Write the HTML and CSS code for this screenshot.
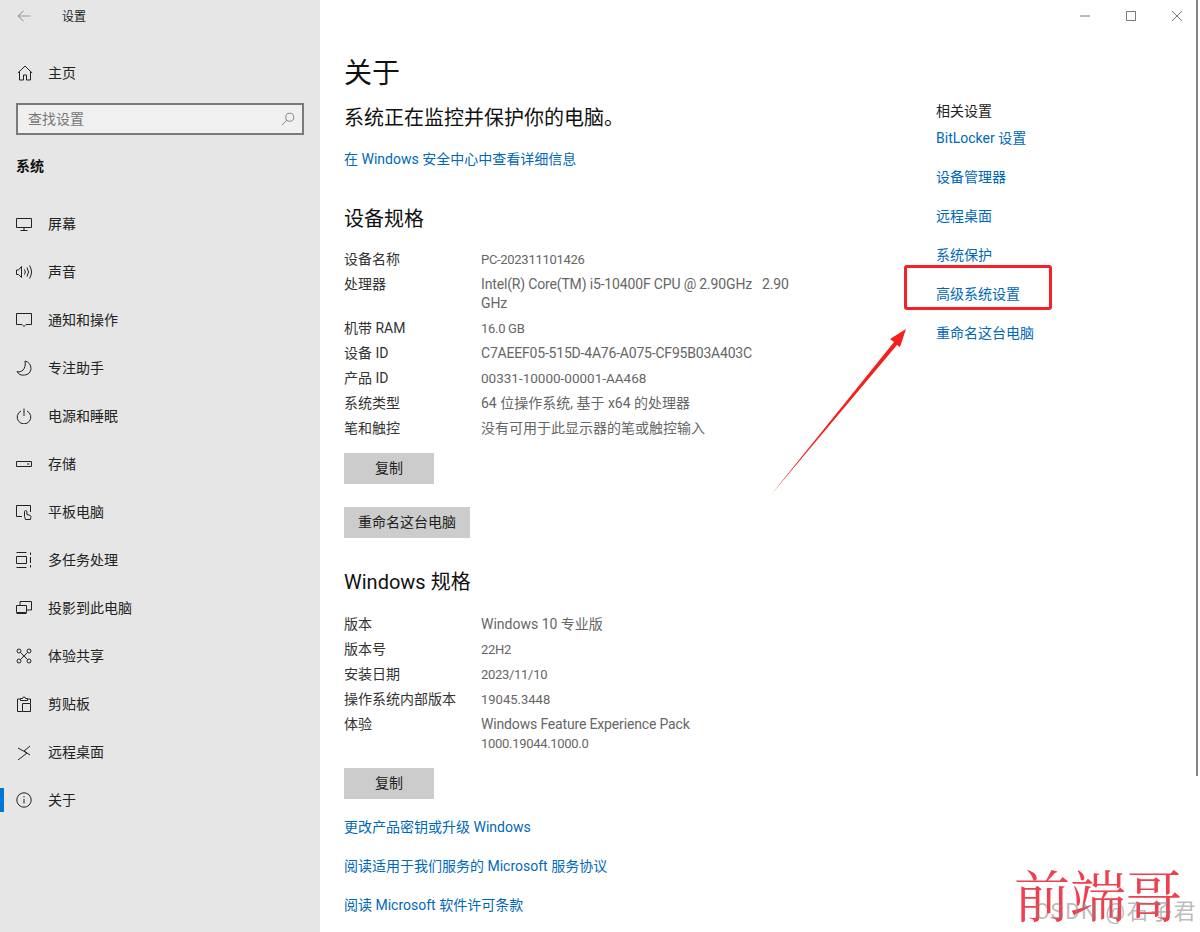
FILE: index.html
```html
<!DOCTYPE html>
<html lang="zh-CN">
<head>
<meta charset="utf-8">
<title>设置</title>
<link rel="stylesheet" href="styles.css">
</head>
<body>
<div class="app">
  <aside class="sidebar">
    <div class="titlebar">
      <svg class="back" viewBox="0 0 16 16"><path d="M15 8H1.500M7.500 2L1.500 8l6 6"/></svg>
      <span class="apptitle">设置</span>
    </div>
    <div class="home">
      <svg class="icon" viewBox="0 0 16 16"><path d="M.8 8L8 1l7.200 7M2.500 6.500V15h4v-5h3v5h4V6.500"/></svg>
      <span>主页</span>
    </div>
    <div class="search">
      <span>查找设置</span>
      <svg class="searchicon" viewBox="0 0 16 16"><circle cx="10" cy="6" r="4.600"/><path d="M6.700 9.300L1 15"/></svg>
    </div>
    <div class="group">系统</div>
    <nav class="nav">
      <div class="item"><svg class="icon" viewBox="0 0 16 16"><path d="M.5 2.500h15v9H.5zM8 11.500v3M4.500 14.500h7"/></svg><span>屏幕</span></div>
      <div class="item"><svg class="icon" viewBox="0 0 16 16"><path d="M.5 6v4.500h2l3 3V2.500l-3 3.500zM8.500 5.500q1.500 2.500 0 5M11 3.500q3 4.500 0 9M13.500 1.500q4 6.500 0 13"/></svg><span>声音</span></div>
      <div class="item"><svg class="icon" viewBox="0 0 16 16"><path d="M.5 1.500h15v11H10l-2 2-2-2H.5z"/></svg><span>通知和操作</span></div>
      <div class="item"><svg class="icon" viewBox="0 0 16 16"><path d="M9 1c4 1 6 4 6 7.500A6.500 6.500 0 0 1 8.500 15 7 7 0 0 1 1 11.500c4 1.500 9.500-2 8-10.500z"/></svg><span>专注助手</span></div>
      <div class="item"><svg class="icon" viewBox="0 0 16 16"><path d="M5 3a6.800 6.800 0 1 0 6 0M8 .5V8"/></svg><span>电源和睡眠</span></div>
      <div class="item"><svg class="icon" viewBox="0 0 16 16"><path d="M.5 5.500h15v5H.5zM11 8h2.500"/></svg><span>存储</span></div>
      <div class="item"><svg class="icon" viewBox="0 0 16 16"><path d="M6 12.500H.5v-11h14V8M8.500 12.500V7.800a1.200 1.200 0 0 1 2.400 0v2.700l3 .8c1 .3 1.200 1 1 2l-.5 2.200H9.500z"/></svg><span>平板电脑</span></div>
      <div class="item"><svg class="icon" viewBox="0 0 16 16"><path d="M.5.500h10M.5 15.500h10M.5 4.500h10v7H.5zM14.500.500v2.500M14.500 5v6M14.500 13v2.500"/></svg><span>多任务处理</span></div>
      <div class="item"><svg class="icon" viewBox="0 0 16 16"><path d="M4 5V1.500h11.500v8.500H11M.5 5.500h10v7H.5zM.5 13.500h10"/></svg><span>投影到此电脑</span></div>
      <div class="item"><svg class="icon" viewBox="0 0 16 16"><circle cx="3" cy="3" r="2"/><circle cx="13" cy="3" r="2"/><circle cx="3" cy="13" r="2"/><circle cx="13" cy="13" r="2"/><path d="M4.500 4.500l7 7M11.500 4.500l-7 7"/></svg><span>体验共享</span></div>
      <div class="item"><svg class="icon" viewBox="0 0 16 16"><path d="M4 3H1.500v12.500h5M12 3h2.500v4M4.500 4.500V2.500H6.500a1.500 1.500 0 0 1 3 0h2v2zM6.500 7.500h8v8h-8z"/></svg><span>剪贴板</span></div>
      <div class="item"><svg class="icon" viewBox="0 0 16 16"><path d="M2 4l9 5-9 7M14 2L8 7l6 4"/></svg><span>远程桌面</span></div>
      <div class="item current"><svg class="icon" viewBox="0 0 16 16"><circle cx="8" cy="8" r="7.200"/><path d="M8 7v4.500M8 4.200v1.300"/></svg><span>关于</span></div>
    </nav>
  </aside>
  <main class="main">
    <div class="content">
      <h1 class="title">关于</h1>
      <p class="status">系统正在监控并保护你的电脑。</p>
      <a class="link first">在 Windows 安全中心中查看详细信息</a>
      <h2 class="heading">设备规格</h2>
      <dl class="specs">
        <dt>设备名称</dt><dd class="num">PC-202311101426</dd>
        <dt>处理器</dt><dd class="tight">Intel(R) Core(TM) i5-10400F CPU @ 2.90GHz&nbsp;&nbsp; 2.90 GHz</dd>
        <dt>机带 RAM</dt><dd class="num">16.0 GB</dd>
        <dt>设备 ID</dt><dd class="guid">C7AEEF05-515D-4A76-A075-CF95B03A403C</dd>
        <dt>产品 ID</dt><dd class="key">00331-10000-00001-AA468</dd>
        <dt>系统类型</dt><dd>64 位操作系统, 基于 x64 的处理器</dd>
        <dt>笔和触控</dt><dd>没有可用于此显示器的笔或触控输入</dd>
      </dl>
      <div class="btn">复制</div>
      <div class="btn second">重命名这台电脑</div>
      <h2 class="heading win">Windows 规格</h2>
      <dl class="specs">
        <dt>版本</dt><dd>Windows 10 专业版</dd>
        <dt>版本号</dt><dd class="num">22H2</dd>
        <dt>安装日期</dt><dd class="num">2023/11/10</dd>
        <dt>操作系统内部版本</dt><dd class="build">19045.3448</dd>
        <dt>体验</dt><dd class="tight">Windows Feature Experience Pack<br><span class="num">1000.19044.1000.0</span></dd>
      </dl>
      <div class="btn">复制</div>
      <div class="links">
        <a class="link">更改产品密钥或升级 Windows</a>
        <a class="link">阅读适用于我们服务的 Microsoft 服务协议</a>
        <a class="link">阅读 Microsoft 软件许可条款</a>
      </div>
    </div>
    <div class="related">
      <div class="related-title">相关设置</div>
      <a class="link">BitLocker 设置</a>
      <a class="link">设备管理器</a>
      <a class="link">远程桌面</a>
      <a class="link">系统保护</a>
      <a class="link">高级系统设置</a>
      <a class="link">重命名这台电脑</a>
    </div>
  </main>
</div>
<div class="winctl">
  <svg viewBox="0 0 10 10"><path d="M0 5h10"/></svg>
  <svg viewBox="0 0 10 10"><path d="M.5.500h9v9h-9z"/></svg>
  <svg viewBox="0 0 10 10"><path d="M0 0l10 10M10 0L0 10"/></svg>
</div>
<div class="scrollbar"></div>
<div class="redbox"></div>
<svg class="arrow" viewBox="0 0 1200 932"><path d="M770 496L894 342 890 339 906 329 900 347 897 345z"/></svg>
<div class="mark">前端哥</div>
<div class="csdn">CSDN @石子君</div>
</body>
</html>
```
FILE: styles.css
```css
* { box-sizing: border-box; }
html, body { margin: 0; height: 932px; overflow: hidden; }
body {
  background: #fff;
  color: #333;
  font-family: Roboto, "Noto Sans CJK SC", sans-serif;
  font-size: 14px;
  line-height: 19px;
  position: relative;
}
.app { display: flex; height: 932px; }
.sidebar { width: 320px; flex: none; background: #e6e6e6; color: #222; }
.titlebar { display: flex; align-items: center; height: 32px; padding-left: 17px; }
.back { width: 14px; height: 14px; fill: none; stroke: #999; stroke-width: 1.200; }
.apptitle { margin: 2px 0 0 31px; font-size: 12px; color: #222; }
.home { display: flex; align-items: center; height: 48px; margin-top: 17px; padding-left: 17px; }
.icon { width: 16px; height: 16px; flex: none; fill: none; stroke: #222; stroke-width: 1; }
.home span { margin-left: 15px; }
.item span { margin-left: 16px; }
.search {
  display: flex; align-items: center; justify-content: space-between;
  height: 32px; margin: 6px 16px 0; padding: 0 7px 0 10px;
  background: #f0f0f0; border: 2px solid #7a7a7a; color: #777;
}
.searchicon { width: 14px; height: 14px; fill: none; stroke: #777; stroke-width: 1; }
.group { margin-top: 22px; padding-left: 16px; height: 19px; font-weight: 700; color: #111; }
.nav { margin-top: 24px; }
.item { position: relative; display: flex; align-items: center; height: 48px; padding-left: 16px; }
.current::before { content: ""; position: absolute; left: 0; top: 12px; width: 4px; height: 24px; background: #0078d7; }
.main { flex: 1; display: flex; }
.content { width: 616px; flex: none; padding: 54px 0 0 24px; }
.title { margin: 0; font-size: 28px; line-height: 40px; font-weight: 400; color: #111; }
.status { margin: 10px 0 0; font-size: 20px; line-height: 28px; color: #111; }
.link { display: block; color: #0068b8; }
.first { margin-top: 18px; }
.heading { margin: 36px 0 0; font-size: 20px; line-height: 28px; font-weight: 400; color: #111; }
.heading.win { margin-top: 30px; }
.specs {
  display: grid; grid-template-columns: 137px 320px; row-gap: 6px;
  margin: 17px 0 0;
}
.win + .specs { margin-top: 19px; }
.specs dt { color: #333; }
.specs dd { margin: 0; color: #666; }
.specs .num, .num { font-size: 13px; letter-spacing: -.3px; }
.specs .tight { letter-spacing: -.16px; }
.specs .guid { letter-spacing: -.2px; }
.specs .key { font-size: 13.500px; }
.specs .build { font-size: 13px; }
.btn {
  width: 90px; height: 31px; margin-top: 15px;
  display: flex; align-items: center; justify-content: center;
  background: #ccc; color: #222;
}
.second { width: 126px; margin-top: 23px; }
.links { display: flex; flex-direction: column; gap: 20px; margin-top: 19px; }
.related { padding: 102px 0 0; flex: none; }
.related-title { color: #222; margin-bottom: 8px; }
.related .link { margin-bottom: 20px; }
.winctl {
  position: absolute; top: 11px; right: 18px;
  display: flex; gap: 36px;
}
.winctl svg { width: 10px; height: 10px; fill: none; stroke: #777; stroke-width: 1; display: block; }
.scrollbar { position: absolute; right: 2px; top: 0; width: 2px; height: 776px; background: #858585; }
.redbox { position: absolute; left: 904px; top: 265px; width: 148px; height: 45px; border: 3px solid #f4212b; border-radius: 3px; }
.arrow { position: absolute; left: 0; top: 0; width: 1200px; height: 932px; fill: #f5201e; pointer-events: none; }
.mark {
  position: absolute; left: 1014px; top: 860px;
  font-family: "Liberation Serif", "Noto Serif CJK SC", "Noto Sans CJK SC", serif;
  font-size: 56px; line-height: 76px; color: #f04050; white-space: nowrap;
}
.csdn {
  position: absolute; right: 3px; top: 898px;
  font-size: 22px; line-height: 28px; letter-spacing: 1.500px; color: rgba(130,130,130,.55); white-space: nowrap;
}
```
